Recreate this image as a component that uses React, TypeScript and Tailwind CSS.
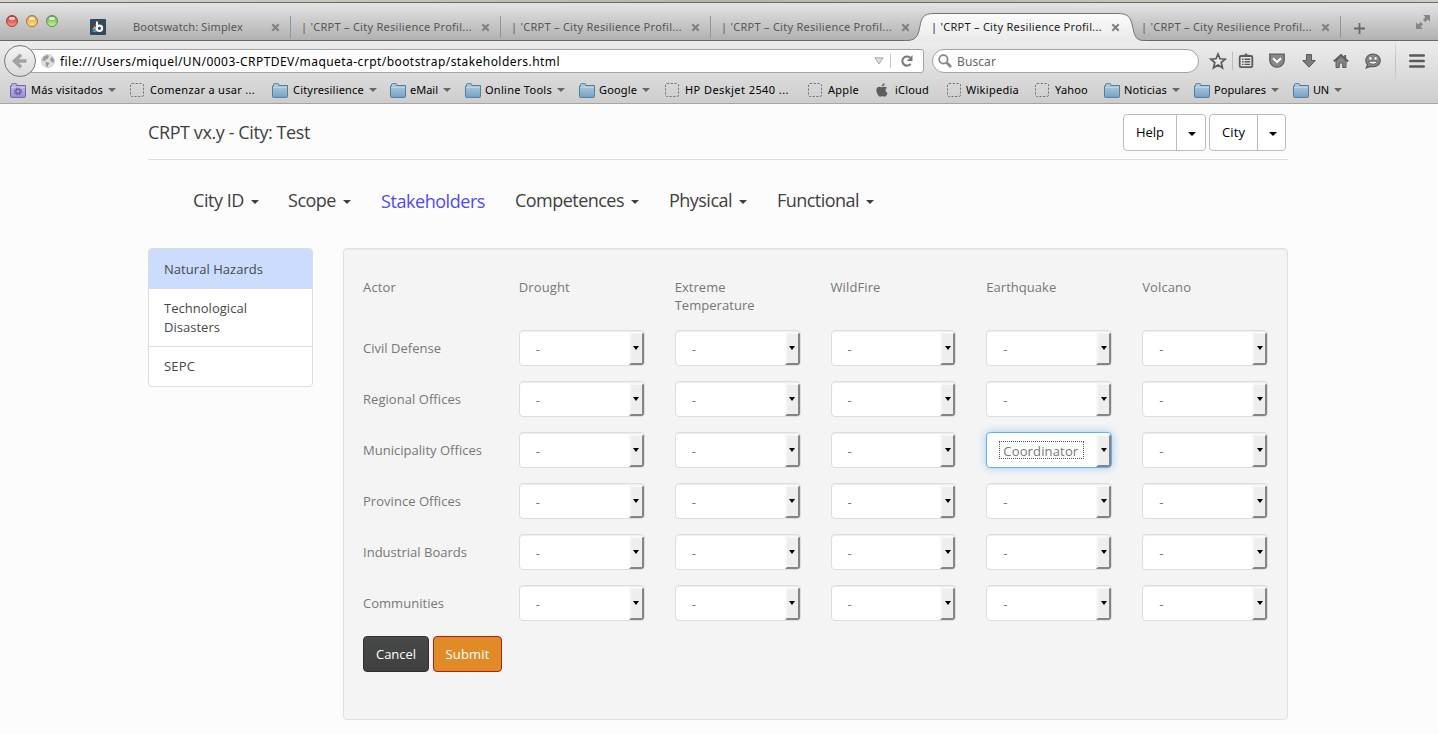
import { useLayoutEffect, useRef, useState } from "react";
import type { ReactNode } from "react";

/* Text whose tracking is measured so that it fills an exact width. */
function Fit({ w, children, className = "" }: { w: number; children: string; className?: string }) {
  const ref = useRef<HTMLSpanElement>(null);
  const [spacing, setSpacing] = useState(0);
  useLayoutEffect(() => {
    if (ref.current) {
      const natural = ref.current.getBoundingClientRect().width;
      setSpacing((w - natural) / children.length);
    }
  }, []);
  return (
    <span ref={ref} className={`inline-block shrink-0 whitespace-pre ${className}`} style={{ letterSpacing: `${spacing}px` }}>
      {children}
    </span>
  );
}

function CloseX() {
  return (
    <svg className="h-[9px] w-[9px] shrink-0" viewBox="0 0 9 9">
      <path d="M1.3 1.3 7.7 7.7M7.7 1.3 1.3 7.7" stroke="#808080" strokeWidth="2.1" />
    </svg>
  );
}

function Tab({ active = false }: { active?: boolean }) {
  return (
    <div className={`relative flex h-[22px] w-[210px] shrink-0 items-center pl-[11px] ${active ? "text-[#1c1c1c]" : "text-[#555]"}`}>
      <Fit w={171}>| 'CRPT – City Resilience Profil...</Fit>
      <span className="ml-[9px] flex"><CloseX /></span>
    </div>
  );
}

const Divider = () => <span className="-mr-px h-[22px] w-px shrink-0 bg-[#949494]" />;

function Light({ ring, fill }: { ring: string; fill: string }) {
  return (
    <span className={`flex h-[12px] w-[12px] justify-center rounded-full border ${ring} ${fill}`}>
      <span className="mt-px h-[3px] w-[6px] rounded-full bg-white/75" />
    </span>
  );
}

function TabStrip() {
  return (
    <div className="relative flex h-[39px] border-t border-b border-t-[#686868] border-b-[#686868] bg-linear-to-b from-[#e4e4e4] to-[#b1b1b1] text-[11px]">
      <svg className="absolute top-[9px] left-[904px] z-10 h-[30px] w-[242px]" viewBox="0 0 242 30">
        <defs>
          <linearGradient id="tab" x1="0" y1="0" x2="0" y2="1">
            <stop offset="0" stopColor="#fbfbfb" />
            <stop offset="1" stopColor="#e9e9e9" />
          </linearGradient>
        </defs>
        <path d="M3 30V28.5C13 28.5 14.5 22 16 14C17.5 6 19 1.5 30 1.5H214C225 1.5 226.5 6 228.5 14C230.5 23 231 28.5 240 28.5V30Z" fill="url(#tab)" />
        <path d="M0 28.5H3C13 28.5 14.5 22 16 14C17.5 6 19 1.5 30 1.5H214C225 1.5 226.5 6 228.5 14C230.5 23 231 28.5 240 28.5H242" fill="none" stroke="#747474" />
      </svg>
      <div className="relative z-20 flex w-full pt-[13px]">
        <div className="-mt-px flex w-[90px] shrink-0 gap-2 pl-[6px]">
          <Light ring="border-[#9b3e3a]" fill="bg-linear-to-b from-[#c9312f] to-[#ff8f89]" />
          <Light ring="border-[#a87530]" fill="bg-linear-to-b from-[#dc9530] to-[#ffe487]" />
          <Light ring="border-[#5c8e42]" fill="bg-linear-to-b from-[#67a848] to-[#c5f59c]" />
        </div>
        <div className="flex h-[22px] w-[200px] shrink-0 items-center text-[#555]">
          <svg className="h-4 w-4 shrink-0" viewBox="0 0 16 16">
            <rect width="16" height="16" rx="1" fill="#34495e" />
            <path d="M6 4 2.5 10.5 5 9Z" fill="#e84b3c" />
            <path d="M5 7 2 11 6 9.5Z" fill="#f6b12f" />
            <path d="M2 12.7 6.5 9V13Z" fill="#36a8df" />
            <path d="M7 2.5V9.5" stroke="#fff" strokeWidth="2" />
            <circle cx="9.4" cy="9.3" r="2.7" fill="none" stroke="#fff" strokeWidth="2.1" />
          </svg>
          <Fit w={110} className="ml-[27px]">Bootswatch: Simplex</Fit>
          <span className="ml-[28px] flex"><CloseX /></span>
        </div>
        <Divider />
        <Tab /><Divider /><Tab /><Divider /><Tab />
        <Tab active /><Tab />
        <Divider />
        <svg className="mt-[7px] ml-[14px] h-[11px] w-[11px] shrink-0" viewBox="0 0 11 11">
          <path d="M5.5 0V11M0 5.5H11" stroke="#686868" strokeWidth="1.8" />
        </svg>
        <svg className="-mt-[2px] ml-[50px] h-[16px] w-[16px] shrink-0" viewBox="0 0 16 16">
          <path d="M8.2 1H15V7.8L12.8 5.6 10.3 8 8 5.7 10.4 3.2ZM1 8.2 3.2 10.4 5.7 8 8 10.3 5.6 12.8 7.8 15H1Z" fill="#858585" />
        </svg>
      </div>
    </div>
  );
}

function Icon({ children, gap }: { children: ReactNode; gap: string }) {
  return <svg className={`h-[18px] w-[18px] shrink-0 ${gap}`} viewBox="0 0 18 18" fill="none" stroke="#5a5a5a" strokeWidth="1.6">{children}</svg>;
}

function Toolbar() {
  return (
    <div className="flex h-[40px] items-center">
      <div className="relative z-10 ml-[4px] flex h-8 w-8 shrink-0 items-center justify-center rounded-full border border-[#787878] bg-linear-to-b from-[#f3f3f3] to-[#dadada]">
        <svg className="h-[16px] w-[16px]" viewBox="0 0 16 16">
          <path d="M9 1.8 2.5 8 9 14.2M3 8H14.5" fill="none" stroke="#a2a2a2" strokeWidth="3.4" />
        </svg>
      </div>
      <div className="-ml-[5px] flex h-6 w-[893px] shrink-0 items-center rounded-r-[3px] border border-[#a2a2a2] bg-white pl-[9px] text-[12px] text-black">
        <svg className="h-[14px] w-[14px]" viewBox="0 0 14 14">
          <circle cx="7" cy="7" r="6.5" fill="#dedede" stroke="#c2c2c2" strokeWidth=".8" />
          <path d="M3 2.5 6.7 1 8 3 6.3 5 4.8 5.2 4 7.2 1.2 6ZM8.8 5.3 11 3 13 6 12.3 9 10.2 7.6ZM4.8 7.7 8.5 8.9 7.2 11.2 6.7 13 4.8 11.4Z" fill="#989898" />
        </svg>
        <Fit w={500} className="ml-[5px] pt-px">file:///Users/miquel/UN/0003-CRPTDEV/maqueta-crpt/bootstrap/stakeholders.html</Fit>
        <svg className="ml-[314px] h-[8px] w-[10px] shrink-0" viewBox="0 0 10 8">
          <path d="M.8.8H9.2L5 7Z" fill="#ddd" stroke="#aaa" />
        </svg>
        <span className="ml-[6px] h-[14px] w-px shrink-0 bg-[#c7c7c7]" />
        <svg className="ml-[9px] h-[14px] w-[14px] shrink-0" viewBox="0 0 14 14">
          <path d="M10.6 9.8A4.6 4.6 0 1 1 10 3.6" fill="none" stroke="#777" strokeWidth="2" />
          <path d="M12.5 1V7H6.8Z" fill="#777" />
        </svg>
      </div>
      <div className="ml-[8px] flex h-6 w-[267px] shrink-0 items-center rounded-full border border-[#a2a2a2] bg-white pl-[5px] text-[12px] text-[#666]">
        <svg className="h-[14px] w-[14px]" viewBox="0 0 14 14" fill="none" stroke="#858585">
          <circle cx="5.4" cy="5.4" r="4.2" strokeWidth="1.8" />
          <path d="M8.7 8.7 13 13" strokeWidth="2.6" />
        </svg>
        <Fit w={39} className="ml-[5px] pt-px">Buscar</Fit>
      </div>
      <Icon gap="ml-[10px]">
        <path d="M9 2 11 6.8 16.2 7.2 12.2 10.6 13.5 15.8 9 13 4.5 15.8 5.8 10.6 1.8 7.2 7 6.8Z" fill="#e8e8e8" strokeWidth="1.7" />
      </Icon>
      <span className="ml-[5px] h-[18px] w-px shrink-0 bg-[#bcbcbc]" />
      <Icon gap="ml-[4px]">
        <rect x="2.7" y="4" width="12.6" height="11.2" rx="1.2" fill="#e5e5e5" strokeWidth="1.8" />
        <path d="M5.5 4.2V2.7H7.4L9 1 10.6 2.7H12.5V4.2Z" fill="#626262" stroke="none" />
        <path d="M5 7.2H6.5M7.5 7.2H13.2M5 9.8H6.5M7.5 9.8H13.2M5 12.4H6.5M7.5 12.4H13.2" strokeWidth="1.4" />
      </Icon>
      <Icon gap="ml-[13px]">
        <path d="M1.8 2.2H16.2V8A7.2 7.2 0 0 1 1.8 8Z" fill="#888" strokeWidth="1.3" />
        <path d="M5 6.3 9 10.1 13 6.3" stroke="#fafafa" strokeWidth="2.1" />
      </Icon>
      <Icon gap="ml-[14px]">
        <path d="M6.5 2.5H11.5V8.5H15.3L9 15.2 2.7 8.5H6.5Z" fill="#7c7c7c" strokeWidth="1" />
      </Icon>
      <Icon gap="ml-[14px]">
        <path d="M4 9V15.5H7.3V11H10.7V15.5H14V9L9 4.8Z" fill="#858585" strokeWidth="1" />
        <path d="M1.8 9.5 9 3 16.2 9.5M13.2 3V6.5" strokeWidth="1.8" />
      </Icon>
      <Icon gap="ml-[14px]">
        <path d="M9 2C4.7 2 1.8 4.7 1.8 8.4 1.8 10 2.4 11.4 3.5 12.5L2.2 16 6.3 14.4C12 15.8 16.2 12.6 16.2 8.4 16.2 4.7 13.3 2 9 2Z" fill="#858585" strokeWidth="1.1" />
        <ellipse cx="6.4" cy="6.4" rx="1.1" ry="1.4" fill="#fff" stroke="none" />
        <ellipse cx="11.6" cy="6.4" rx="1.1" ry="1.4" fill="#fff" stroke="none" />
        <path d="M4.6 9.3H13.4C12.2 13 5.8 13 4.6 9.3Z" fill="#fff" stroke="#555" strokeWidth=".8" />
      </Icon>
      <span className="ml-[13px] h-[36px] w-px shrink-0 bg-linear-to-b from-[#dcdcdc] via-[#bebebe] to-[#d0d0d0]" />
      <Icon gap="ml-[12px]">
        <path d="M2.3 3.5H15.7M2.3 9H15.7M2.3 14.5H15.7" strokeWidth="2.6" strokeLinecap="round" />
      </Icon>
    </div>
  );
}

function Folder({ smart = false }: { smart?: boolean }) {
  return (
    <svg className="h-[15px] w-[16px] shrink-0" viewBox="0 0 16 15">
      <defs>
        <linearGradient id="blueFolder" x1="0" y1="0" x2="0" y2="1"><stop stopColor="#b4cfe2" /><stop offset="1" stopColor="#77a2c3" /></linearGradient>
        <linearGradient id="violetFolder" x1="0" y1="0" x2="0" y2="1"><stop stopColor="#c3b9e6" /><stop offset="1" stopColor="#9c8fd2" /></linearGradient>
      </defs>
      <path d="M1.5 3V1.5Q1.5.7 2.3.7H6Q6.7.7 6.7 1.5V2.5H15.5V13.5Q15.5 14.4 14.6 14.4H1.4Q.5 14.4.5 13.5V3Z" fill={smart ? "url(#violetFolder)" : "url(#blueFolder)"} stroke={smart ? "#7565aa" : "#547d9d"} />
      <path d="M1 4.5H15" stroke="#fff" strokeOpacity=".3" />
      {smart && <><circle cx="8" cy="8.4" r="2.2" fill="none" stroke="#6c5bab" strokeWidth="1.5" /><circle cx="8" cy="8.4" r="3.5" fill="none" stroke="#6c5bab" strokeWidth="1.1" strokeDasharray="1.3 1.45" /></>}
    </svg>
  );
}

function Dashed() {
  return (
    <svg className="h-[14px] w-[14px] shrink-0" viewBox="0 0 14 14">
      <rect x=".5" y=".5" width="13" height="13" rx="1.5" fill="none" stroke="#757575" strokeDasharray="2.2 1.5" />
    </svg>
  );
}

function Apple() {
  return (
    <svg className="h-[14px] w-[12px] shrink-0" viewBox="0 0 12 14">
      <path d="M8.6.2C8.7 2 7.4 3.3 5.9 3.3 5.8 1.7 7.1.4 8.6.2ZM11 4.8C8.8 6.1 9.1 9 11.6 10 10.6 12.6 9.3 14.2 7.7 13.5 6.6 13 6 13 5 13.5 3.6 14.1 2.4 12.8 1.4 11 .1 8.6-.1 5.6 1.7 4.3 3 3.3 4.2 3.7 5.2 4.1 6 4.4 6.3 4.3 7.2 4 8.8 3.4 10.2 3.7 11 4.8Z" fill="#5d5d5d" />
    </svg>
  );
}

type Mark = { label: string; w: number; box: string; icon: "smart" | "folder" | "page" | "apple"; gap: string };
const marks: Mark[] = [
  { label: "Más visitados", w: 72, box: "w-[120px]", icon: "smart", gap: "ml-[5px]" },
  { label: "Comenzar a usar ...", w: 105, box: "w-[142px]", icon: "page", gap: "ml-[6px]" },
  { label: "Cityresilience", w: 71, box: "w-[118px]", icon: "folder", gap: "ml-[5px]" },
  { label: "eMail", w: 28, box: "w-[75px]", icon: "folder", gap: "ml-[4px]" },
  { label: "Online Tools", w: 67, box: "w-[114px]", icon: "folder", gap: "ml-[4px]" },
  { label: "Google", w: 38, box: "w-[86px]", icon: "folder", gap: "ml-[4px]" },
  { label: "HP Deskjet 2540 ...", w: 104, box: "w-[143px]", icon: "page", gap: "ml-[6px]" },
  { label: "Apple", w: 31, box: "w-[68px]", icon: "page", gap: "ml-[6px]" },
  { label: "iCloud", w: 34, box: "w-[71px]", icon: "apple", gap: "ml-[7px]" },
  { label: "Wikipedia", w: 53, box: "w-[88px]", icon: "page", gap: "ml-[5px]" },
  { label: "Yahoo", w: 33, box: "w-[69px]", icon: "page", gap: "ml-[6px]" },
  { label: "Noticias", w: 43, box: "w-[90px]", icon: "folder", gap: "ml-[4px]" },
  { label: "Populares", w: 52, box: "w-[99px]", icon: "folder", gap: "ml-[4px]" },
  { label: "UN", w: 16, box: "w-[60px]", icon: "folder", gap: "ml-[4px]" },
];

function Bookmarks() {
  return (
    <div className="flex h-[18px] items-center pl-[10px] text-[11px] text-black">
      {marks.map((m) => (
        <div key={m.label} className={`flex shrink-0 items-center ${m.box}`}>
          {m.icon === "page" ? <Dashed /> : m.icon === "apple" ? <Apple /> : <Folder smart={m.icon === "smart"} />}
          <Fit w={m.w} className={m.gap}>{m.label}</Fit>
          {(m.icon === "folder" || m.icon === "smart") && (
            <span className="ml-[5px] border-x-4 border-t-4 border-x-transparent border-t-[#666]" />
          )}
        </div>
      ))}
    </div>
  );
}

const Caret = ({ className = "" }: { className?: string }) => (
  <span className={`inline-block border-x-4 border-t-4 border-x-transparent ${className}`} />
);

function SplitButton({ label, w, main, side }: { label: string; w: number; main: string; side: string }) {
  return (
    <div className="flex h-[37px] rounded-[4px] border border-[#bbb] bg-white text-[13px] text-black">
      <span className={`flex items-center justify-center border-r border-[#bbb] ${main}`}><Fit w={w}>{label}</Fit></span>
      <span className={`flex items-center justify-center pt-[3px] pl-[2px] ${side}`}><Caret className="border-t-black" /></span>
    </div>
  );
}

function NavItem({ label, w, gap, active = false }: { label: string; w: number; gap: string; active?: boolean }) {
  return (
    <div className={`flex items-center ${gap} ${active ? "pt-[2px] text-[#5148f5]" : "text-[#3f3f3f]"}`}>
      <Fit w={w}>{label}</Fit>
      {!active && <Caret className="mt-[4px] ml-[7px] border-t-[#3f3f3f]" />}
    </div>
  );
}

function Select({ value }: { value: string }) {
  const focused = value !== "-";
  return (
    <div className={`flex h-[36px] justify-between overflow-hidden rounded-[4px] border bg-white ${focused ? "border-[#66afe9] shadow-[0_0_8px_rgba(102,175,233,0.6)]" : "border-[#ddd] shadow-[inset_0_1px_1px_rgba(0,0,0,0.075)]"}`}>
      {focused ? (
        <span className="mt-[8px] ml-[12px] flex h-[18px] w-[85px] items-center border border-dotted border-[#555] pt-[2px] pl-[3px]">
          <Fit w={75}>{value}</Fit>
        </span>
      ) : (
        <span className="pt-[8px] pl-[16px]">{value}</span>
      )}
      <span className="mt-px flex w-[15px] shrink-0 items-center justify-center rounded-r-[2px] border-2 border-t-[#f8f8f8] border-r-[#858585] border-b-[#858585] border-l-[#f8f8f8] bg-[#eee]">
        <span className="mb-[2px] border-x-[3.5px] border-t-4 border-x-transparent border-t-black" />
      </span>
    </div>
  );
}

const hazards: [string, number][] = [["Drought", 51], ["Extreme", 51], ["WildFire", 50], ["Earthquake", 70], ["Volcano", 49]];
const actors: [string, number][] = [
  ["Civil Defense", 78], ["Regional Offices", 98], ["Municipality Offices", 119],
  ["Province Offices", 98], ["Industrial Boards", 104], ["Communities", 81],
];

export default function App() {
  return (
    <div className="h-[734px] w-[1438px] overflow-hidden bg-[#fcfcfc] font-['Open_Sans','Noto_Sans',sans-serif]">
      <header className="h-[104px] border-b border-[#a5a5a5] bg-linear-to-b from-[#ececec] from-40% to-[#cdcdcd] font-['Noto_Sans','Open_Sans',sans-serif]">
        <div className="h-[2px] bg-linear-to-r from-[#d5d5ce] via-[#b4b6a5] to-[#cccdc5]" />
        <TabStrip />
        <Toolbar />
        <Bookmarks />
      </header>

      <main className="ml-[148px] w-[1140px]">
        <div className="flex h-[56px] items-start justify-between border-b border-[#ddd] pt-[10px] pr-[2px]">
          <h1 className="pt-[6px] text-[18px] leading-6 text-[#3f3f3f]"><Fit w={162}>CRPT vx.y - City: Test</Fit></h1>
          <div className="flex gap-[3px]">
            <SplitButton label="Help" w={28} main="w-[53px]" side="w-[28px]" />
            <SplitButton label="City" w={23} main="w-[48px]" side="w-[27px]" />
          </div>
        </div>

        <nav className="flex h-[80px] items-center pl-[45px] text-[18px]">
          <NavItem label="City ID" w={51} gap="" />
          <NavItem label="Scope" w={48} gap="ml-[29px]" />
          <NavItem label="Stakeholders" w={104} gap="ml-[30px]" active />
          <NavItem label="Competences" w={109} gap="ml-[30px]" />
          <NavItem label="Physical" w={63} gap="ml-[30px]" />
          <NavItem label="Functional" w={82} gap="ml-[30px]" />
        </nav>

        <div className="mt-[8px] flex items-start gap-[30px] text-[13px]">
          <aside className="w-[165px] rounded-[4px] border border-[#ddd] bg-white leading-[19px] text-[#484848]">
            <div className="h-[40px] rounded-t-[3px] border-b border-[#ddd] bg-[#cbdcff] pt-[11px] pl-[15px]"><Fit w={99}>Natural Hazards</Fit></div>
            <div className="h-[58px] border-b border-[#ddd] pt-[10px] pl-[15px]">
              <Fit w={83}>Technological</Fit><br /><Fit w={56}>Disasters</Fit>
            </div>
            <div className="h-[39px] pt-[10px] pl-[15px]"><Fit w={31}>SEPC</Fit></div>
          </aside>

          <section className="h-[472px] w-[945px] rounded-[4px] border border-[#e0e0e0] bg-[#f4f4f4] px-[19px] pt-[29px] text-[#777] shadow-[inset_0_1px_1px_rgba(0,0,0,0.05)]">
            <div className="grid h-[52px] grid-cols-6 gap-x-[30px] leading-[18px]">
              <div><Fit w={33}>Actor</Fit></div>
              {hazards.map(([name, w]) => (
                <div key={name}>
                  <Fit w={w}>{name}</Fit>
                  {name === "Extreme" && <><br /><Fit w={80}>Temperature</Fit></>}
                </div>
              ))}
            </div>
            {actors.map(([name, w]) => (
              <div key={name} className="mb-[15px] grid h-[36px] grid-cols-6 gap-x-[30px] leading-[20px]">
                <div className="pt-[8px]"><Fit w={w}>{name}</Fit></div>
                {hazards.map(([hazard]) => (
                  <Select key={hazard} value={name === "Municipality Offices" && hazard === "Earthquake" ? "Coordinator" : "-"} />
                ))}
              </div>
            ))}
            <div className="flex gap-1 text-white">
              <button className="flex h-[36px] w-[66px] items-center justify-center rounded-[4px] border border-[#2e2f2f] bg-linear-to-b from-[#484949] to-[#3e3f3e] pt-[2px]"><Fit w={40}>Cancel</Fit></button>
              <button className="flex h-[36px] w-[69px] items-center justify-center rounded-[4px] border border-[#b02010] bg-[#e08b27] pt-[2px]"><Fit w={44}>Submit</Fit></button>
            </div>
          </section>
        </div>
      </main>
    </div>
  );
}
